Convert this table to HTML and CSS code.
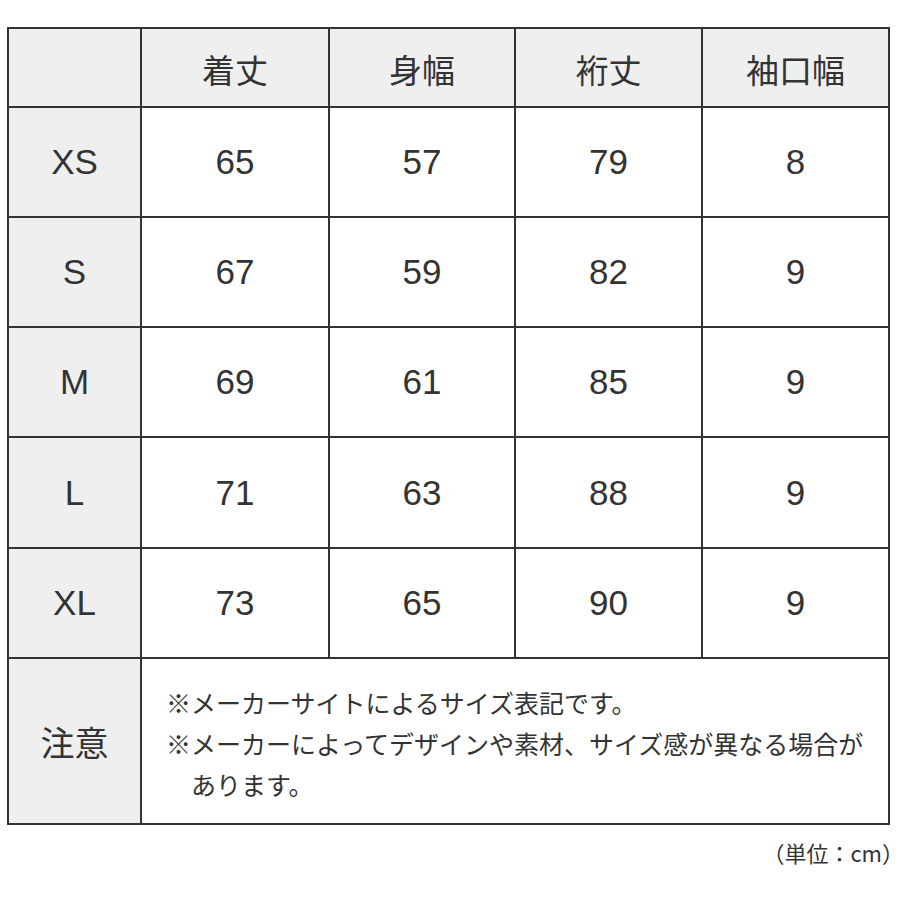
FILE: index.html
```html
<!DOCTYPE html>
<html lang="ja">
<head>
<meta charset="utf-8">
<link rel="stylesheet" href="styles.css">
</head>
<body>
<div class="page">
  <div class="size-table">
    <div class="cell head corner"></div>
    <div class="cell head">着丈</div>
    <div class="cell head">身幅</div>
    <div class="cell head">裄丈</div>
    <div class="cell head">袖口幅</div>

    <div class="cell label">XS</div>
    <div class="cell num">65</div>
    <div class="cell num">57</div>
    <div class="cell num">79</div>
    <div class="cell num">8</div>

    <div class="cell label">S</div>
    <div class="cell num">67</div>
    <div class="cell num">59</div>
    <div class="cell num">82</div>
    <div class="cell num">9</div>

    <div class="cell label">M</div>
    <div class="cell num">69</div>
    <div class="cell num">61</div>
    <div class="cell num">85</div>
    <div class="cell num">9</div>

    <div class="cell label">L</div>
    <div class="cell num">71</div>
    <div class="cell num">63</div>
    <div class="cell num">88</div>
    <div class="cell num">9</div>

    <div class="cell label">XL</div>
    <div class="cell num">73</div>
    <div class="cell num">65</div>
    <div class="cell num">90</div>
    <div class="cell num">9</div>

    <div class="cell label note-label">注意</div>
    <div class="cell note">
      <p class="note-line">※メーカーサイトによるサイズ表記です。</p>
      <p class="note-line">※メーカーによってデザインや素材、サイズ感が異なる場合があります。</p>
    </div>
  </div>
  <div class="unit">（単位：cm<span class="paren-end">）</span></div>
</div>
</body>
</html>
```

FILE: styles.css
```css
html, body {
  margin: 0;
  padding: 0;
  background: #ffffff;
}

body {
  font-family: "Liberation Sans", "Noto Sans CJK JP", sans-serif;
  color: #333333;
}

.page {
  padding: 27px 0 0 7px;
  width: 893px;
}

.size-table {
  display: grid;
  grid-template-columns: 131px 186px 184px 185px 185px;
  grid-template-rows: 77px 108px 108px 108px 109px 108px 164px;
  gap: 2px;
  padding: 2px;
  background: #333333;
  width: max-content;
}

.cell {
  background: #ffffff;
  display: flex;
  align-items: center;
  justify-content: center;
}

.head {
  background: #efefef;
  font-family: "Noto Sans CJK JP", sans-serif;
  font-size: 33px;
  padding-top: 2px;
}

.label {
  background: #efefef;
  font-size: 35px;
}

.num {
  font-size: 35px;
}

.note-label {
  font-family: "Noto Sans CJK JP", sans-serif;
  font-size: 34px;
  grid-column: 1;
}

.note {
  grid-column: 2 / span 4;
  flex-direction: column;
  align-items: stretch;
  justify-content: center;
  padding: 4px 8px 0 24px;
  font-family: "Noto Sans CJK JP", sans-serif;
  font-size: 25px;
  line-height: 41px;
}

.note-line {
  margin: 0;
  padding-left: 1em;
  text-indent: -1em;
}

.unit {
  font-family: "Noto Sans CJK JP", sans-serif;
  font-size: 22px;
  text-align: right;
  margin-top: 11px;
  width: 886px;
}

.paren-end {
  font-feature-settings: "halt";
}
```
